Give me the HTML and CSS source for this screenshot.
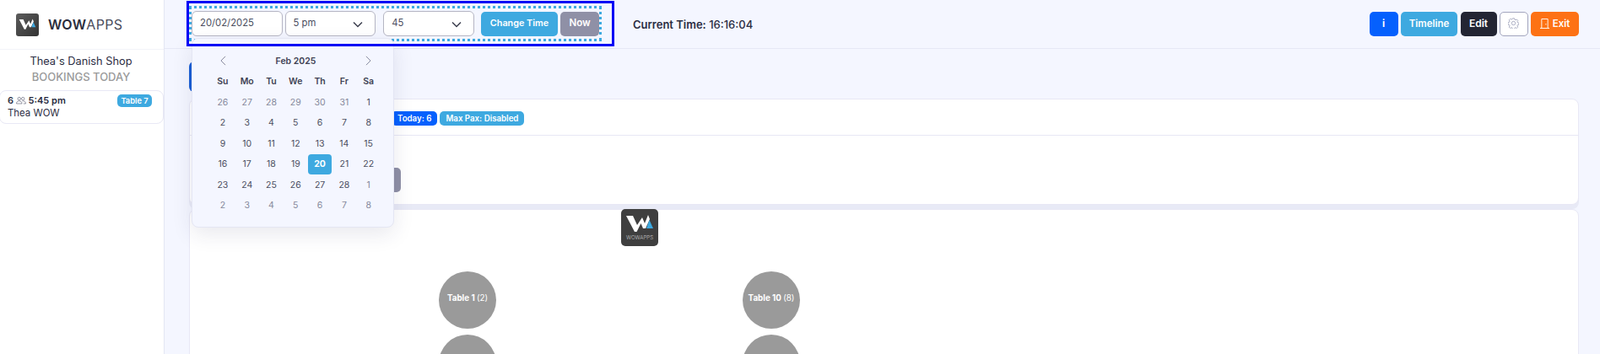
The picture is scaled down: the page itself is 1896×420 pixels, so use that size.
FILE: index.html
```html
<!DOCTYPE html>
<html lang="en">
<head>
  <meta charset="UTF-8">
  <title>Bookings</title>
  <link rel="stylesheet" href="styles.css">
</head>
<body>
  <div class="app">
    <aside class="sidebar">
      <div class="brand">
        <div class="brand-icon">
          <svg viewBox="0 -3.500 44 44" width="27" height="27"><path d="M6 8h8l5 11 6-9 3 7 4-10 2 5-5 11h-3l-2.500-6-5 10H16z" fill="#fff"/><path d="M33.500 13l4.500 10h-8z" fill="#3ea9e0"/></svg>
        </div>
        <div class="brand-name"><strong>WOW</strong>APPS</div>
      </div>
      <div class="shop-name">Thea's Danish Shop</div>
      <div class="shop-sub">BOOKINGS TODAY</div>
      <div class="booking">
        <div class="booking-top">
          <span class="booking-time">6
            <svg class="pax-icon" viewBox="0 0 16 12" width="12" height="10" fill="none" stroke="#50536a" stroke-width=".8"><circle cx="5" cy="3.500" r="2.300"/><circle cx="11" cy="3.500" r="2.300"/><path d="M.7 11.300c0-2.800 1.800-4.200 4.300-4.200s4.300 1.400 4.300 4.200zM10 7.200c.4-.1.700-.1 1-.1 2.500 0 4.300 1.400 4.300 4.200h-3.500"/></svg>
            5:45 pm</span>
          <span class="badge badge-info badge-table">Table 7</span>
        </div>
        <div class="booking-name">Thea WOW</div>
      </div>
    </aside>

    <div class="main">
      <header class="topbar">
        <div class="highlight">
          <form class="time-form">
            <div class="field">20/02/2025</div>
            <div class="field field-select">5 pm
              <svg viewBox="0 0 12 8" width="12" height="8" fill="none" stroke="#3c3f4f" stroke-width="1.500"><path d="M1 1.500l5 5 5-5"/></svg>
            </div>
            <div class="field field-select field-min">45
              <svg viewBox="0 0 12 8" width="12" height="8" fill="none" stroke="#3c3f4f" stroke-width="1.500"><path d="M1 1.500l5 5 5-5"/></svg>
            </div>
            <button type="button" class="btn btn-info btn-change">Change Time</button>
            <button type="button" class="btn btn-grey btn-now">Now</button>
          </form>
        </div>
        <div class="clock"><strong>Current Time:</strong> 16:16:04</div>
        <div class="actions">
          <button type="button" class="btn btn-blue btn-i">i</button>
          <button type="button" class="btn btn-info btn-timeline">Timeline</button>
          <button type="button" class="btn btn-dark btn-edit">Edit</button>
          <button type="button" class="btn btn-outline">
            <svg viewBox="0 0 16 16" width="13" height="13" fill="none" stroke="#a2a5bd" stroke-width="1.100"><path d="M6.700 1h2.600l.4 1.800 1.400.6 1.600-1 1.800 1.800-1 1.600.6 1.400 1.800.4v2.600l-1.800.4-.6 1.400 1 1.600-1.800 1.800-1.600-1-1.400.6-.4 1.800H6.700l-.4-1.800-1.400-.6-1.600 1-1.800-1.800 1-1.600-.6-1.400-1.800-.4V6.800l1.800-.4.6-1.400-1-1.600 1.800-1.800 1.600 1 1.400-.6z"/><circle cx="8" cy="8" r="2.700"/></svg>
          </button>
          <button type="button" class="btn btn-orange btn-exit">
            <svg viewBox="0 0 12 13" width="11" height="12" fill="none" stroke="#fff" stroke-width="1"><path d="M0 12.500h12M2 12.500V.5h8v12M7.500 6.500v1.500"/></svg>
            Exit</button>
        </div>
      </header>

      <div class="content">
        <div class="tab-row">
          <div class="tab"></div>
        </div>
        <section class="card card-info">
          <div class="card-head">
            <span class="badge badge-blue">Today: 6</span>
            <span class="badge badge-info">Max Pax: Disabled</span>
          </div>
          <div class="card-body">
            <div class="filter-btn"></div>
          </div>
        </section>
        <section class="card card-floor">
          <div class="floor-logo">
            <svg viewBox="0 0 44 30" width="44" height="30"><path d="M6 8h8l5 11 6-9 3 7 4-10 2 5-5 11h-3l-2.500-6-5 10H16z" fill="#fff"/><path d="M33.500 13l4.500 10h-8z" fill="#3ea9e0"/></svg>
            <span>WOWAPPS</span>
          </div>
          <div class="table-spot spot-a1">Table 1&nbsp;<em>(2)</em></div>
          <div class="table-spot spot-a2"></div>
          <div class="table-spot spot-b1">Table 10&nbsp;<em>(8)</em></div>
          <div class="table-spot spot-b2"></div>
        </section>
      </div>
    </div>
  </div>

  <div class="calendar">
    <div class="cal-head">
      <svg viewBox="0 0 8 14" width="7" height="12" fill="none" stroke="#7e8299" stroke-width="1.100"><path d="M7 1L1 7l6 6"/></svg>
      <span>Feb 2025</span>
      <svg viewBox="0 0 8 14" width="7" height="12" fill="none" stroke="#7e8299" stroke-width="1.100"><path d="M1 1l6 6-6 6"/></svg>
    </div>
    <div class="cal-grid">
      <b>Su</b><b>Mo</b><b>Tu</b><b>We</b><b>Th</b><b>Fr</b><b>Sa</b>
      <i>26</i><i>27</i><i>28</i><i>29</i><i>30</i><i>31</i><span>1</span>
      <span>2</span><span>3</span><span>4</span><span>5</span><span>6</span><span>7</span><span>8</span>
      <span>9</span><span>10</span><span>11</span><span>12</span><span>13</span><span>14</span><span>15</span>
      <span>16</span><span>17</span><span>18</span><span>19</span><span class="cal-today">20</span><span>21</span><span>22</span>
      <span>23</span><span>24</span><span>25</span><span>26</span><span>27</span><span>28</span><i>1</i>
      <i>2</i><i>3</i><i>4</i><i>5</i><i>6</i><i>7</i><i>8</i>
    </div>
  </div>
</body>
</html>
```

FILE: styles.css
```css
html, body { margin: 0; padding: 0; height: 420px; overflow: hidden; }
body { font-family: Inter, "Open Sans", sans-serif; font-size: 13px; color: #3f4254; background: #f4f6ff; position: relative; }
.app { display: flex; height: 420px; overflow: hidden; }

.sidebar { width: 195px; flex: none; box-sizing: border-box; background: #fff; border-right: 1px solid #e4e6f3; text-align: center; }
.brand { display: flex; align-items: center; height: 59px; box-sizing: border-box; padding-left: 19px; gap: 11px; border-bottom: 1px solid #f2f3f9; }
.brand-icon { width: 27px; height: 27px; border-radius: 3px; background: linear-gradient(135deg, #5c5c5c, #333); }
.brand-icon svg { display: block; }
.brand-name { font-size: 16px; color: #4a4c5c; letter-spacing: .3px; }
.brand-name strong { font-weight: 600; color: #2b2d3c; }
.shop-name { font-size: 12.800px; line-height: 18px; margin-top: 5px; padding-right: 2px; color: #2b2d42; }
.shop-sub { font-size: 13px; line-height: 18px; padding-right: 2px; font-weight: 500; color: #9a9a9a; }
.booking { margin: 7px 0 0 -1px; padding: 3px 13px 0 9px; height: 40px; box-sizing: border-box; border: 1px solid #e8e8f5; border-radius: 8px; text-align: left; color: #2b2d42; }
.booking-top { display: flex; justify-content: space-between; align-items: center; height: 16px; }
.booking-time { font-size: 11px; font-weight: 600; }
.pax-icon { vertical-align: -1px; }
.booking-name { font-size: 11.400px; line-height: 15px; }

.badge { display: inline-block; font-size: 9.700px; font-weight: 600; line-height: 15px; padding: 0 7px; border-radius: 5px; color: #fff; }
.badge-info { background: #3ea9e0; }
.badge-blue { background: #0560fd; }
.badge-table { font-size: 9.300px; padding: 0; width: 41px; text-align: center; }

.main { flex: 1; min-width: 0; }
.topbar { height: 58px; box-sizing: border-box; border-bottom: 1px solid #e6e8f5; display: flex; align-items: flex-start; padding-left: 26px; }
/* blue tour frame: drawn over the date popup, the dotted form goes under it */
.highlight { position: relative; height: 54px; width: 507px; box-sizing: border-box; padding: 6px 0 0 3px; margin-top: 1px; flex: none; }
.highlight::after { content: ""; position: absolute; inset: 0; border: 3px solid #0000f5; z-index: 2; pointer-events: none; }
.time-form { display: flex; align-items: center; gap: 3px; height: 42px; width: 489px; box-sizing: border-box; border: 3px dotted #3ea9e0; }
.field { display: flex; align-items: center; justify-content: space-between; width: 108px; height: 30px; box-sizing: border-box; padding: 0 9px 3px; border: 1px solid #b5b5c3; border-radius: 6px; background: #fff; font-size: 11.300px; color: #4b4e60; }
.field svg { margin-top: 4px; }
.field-select { padding-right: 14px; }
.field-min { margin-left: 6px; }
.btn { border: 0; font-family: inherit; font-size: 11.500px; font-weight: 600; height: 29px; border-radius: 5px; color: #fff; padding: 0 0 2px; display: inline-flex; align-items: center; justify-content: center; gap: 4px; }
.btn-info { background: #3ea9e0; }
.btn-grey { background: #8f90a6; }
.btn-blue { background: #0560fd; }
.btn-dark { background: #232533; }
.btn-orange { background: #fd7214; }
.btn-outline { background: #fff; border: 1px solid #a2a5bd; box-sizing: border-box; }
.btn-change { width: 92px; margin-left: 5px; font-size: 10.800px; }
.btn-now { width: 46px; }
.clock { margin: 21px 0 0 22px; font-size: 13px; line-height: 16px; color: #2b2d42; font-weight: 500; }
.clock strong { font-weight: 600; }
.actions { margin-left: auto; margin-right: 25px; margin-top: 14px; display: flex; gap: 3.500px; }
.btn-i { width: 34px; font-weight: 700; }
.btn-timeline { width: 67px; }
.btn-edit { width: 43px; font-size: 12px; }
.btn-outline { width: 33.500px; }
.btn-exit { width: 57px; font-size: 11.500px; }

.content { padding: 15px 25px 0 29px; }
.tab-row { height: 44px; }
.tab { background: #1b5fd6; height: 36px; width: 100px; border-radius: 6px; }
.card { background: #fff; border: 1px solid #e8e8f5; border-radius: 8px; box-sizing: border-box; }
.card-info { height: 126px; box-shadow: 0 5px 0 #e8eaf6; }
.card-head { height: 43px; box-sizing: border-box; border-bottom: 1px solid #e8e8f5; padding: 14px 0 0 239px; display: flex; gap: 3px; align-items: flex-start; }
.card-head .badge { height: 17px; line-height: 17px; }
.card-body { padding: 38px 0 0 200px; }
.filter-btn { width: 50px; height: 29px; border-radius: 5px; background: #8f90a6; }
.card-floor { position: relative; height: 300px; margin-top: 5px; }
.floor-logo { position: absolute; left: 511px; top: -1px; width: 44px; height: 44px; border-radius: 5px; background: #3f3f3f; text-align: center; }
.floor-logo svg { display: block; }
.floor-logo span { display: block; font-size: 6.200px; font-weight: 300; line-height: 8px; color: #c4c4c4; }
.table-spot { position: absolute; width: 68px; height: 68px; box-sizing: border-box; padding-bottom: 6px; border-radius: 50%; background: #9a9a9a; color: #fff; font-size: 9.800px; font-weight: 700; display: flex; align-items: center; justify-content: center; white-space: nowrap; }
.table-spot em { font-style: normal; font-weight: 400; }
.spot-a1 { left: 295px; top: 73px; }
.spot-a2 { left: 295px; top: 148px; }
.spot-b1 { left: 655px; top: 73px; }
.spot-b2 { left: 655px; top: 148px; }

.calendar { position: absolute; z-index: 1; left: 227px; top: 45px; width: 240px; height: 225px; box-sizing: border-box; background: #f4f6ff; border: 1px solid #e4e6f3; border-radius: 8px; box-shadow: 0 8px 24px rgba(40, 40, 90, .1); }
.cal-head { display: flex; justify-content: space-between; align-items: center; padding: 0 26px 0 33px; height: 18px; margin-top: 17px; font-size: 10.500px; font-weight: 600; color: #3f4254; }
.cal-grid { display: grid; grid-template-columns: repeat(7, 28.800px); grid-auto-rows: 24.500px; padding-left: 21.500px; margin-top: 3.500px; font-size: 10.500px; }
.cal-grid > * { display: flex; align-items: center; justify-content: center; font-style: normal; font-weight: 400; border-radius: 4px; color: #4a4d5e; }
.cal-grid b { font-weight: 600; color: #3f4254; }
.cal-grid i { color: #85889b; }
.cal-grid .cal-today { background: #3ea9e0; color: #fff; font-weight: 700; }
```
